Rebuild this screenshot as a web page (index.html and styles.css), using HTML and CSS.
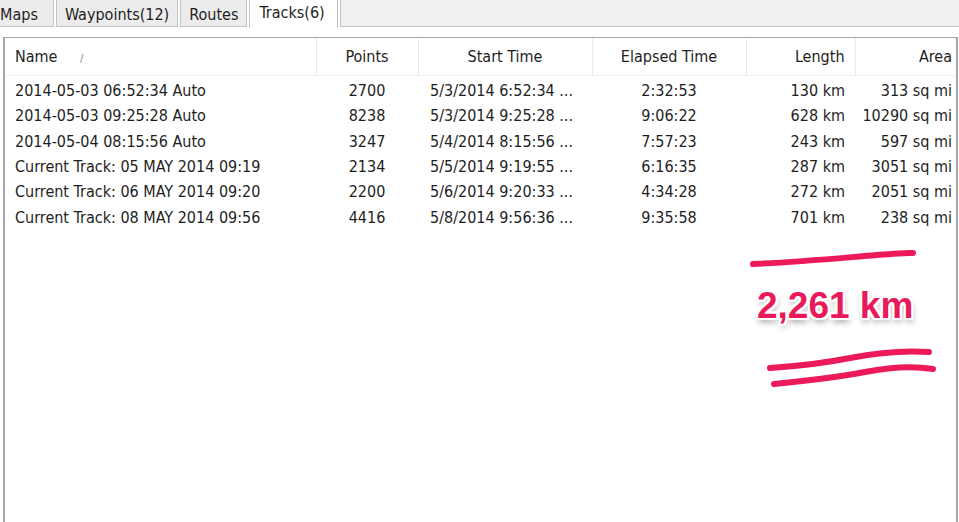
FILE: index.html
```html
<!DOCTYPE html>
<html lang="en">
<head>
    <meta charset="UTF-8">
    <title>Tracks</title>
    <link rel="stylesheet" href="styles.css">
</head>
<body>

    <div class="tabbar">
        <div class="tab tab-first">Maps</div>
        <div class="tab">Waypoints(12)</div>
        <div class="tab">Routes</div>
        <div class="tab active">Tracks(6)</div>
        <div class="tab-rest"></div>
    </div>

    <div class="pane">
        <div class="list">
            <table class="tracks">
                <colgroup>
                    <col class="c-name">
                    <col class="c-points">
                    <col class="c-start">
                    <col class="c-elapsed">
                    <col class="c-length">
                    <col class="c-area">
                </colgroup>
                <thead>
                    <tr>
                        <th class="left">Name <span class="sort">/</span></th>
                        <th>Points</th>
                        <th>Start Time</th>
                        <th>Elapsed Time</th>
                        <th class="right">Length</th>
                        <th class="right">Area</th>
                    </tr>
                </thead>
                <tbody>
                    <tr><td class="left">2014-05-03 06:52:34 Auto</td><td>2700</td><td class="start">5/3/2014 6:52:34 ...</td><td>2:32:53</td><td class="right">130 km</td><td class="right">313 sq mi</td></tr>
                    <tr><td class="left">2014-05-03 09:25:28 Auto</td><td>8238</td><td class="start">5/3/2014 9:25:28 ...</td><td>9:06:22</td><td class="right">628 km</td><td class="right">10290 sq mi</td></tr>
                    <tr><td class="left">2014-05-04 08:15:56 Auto</td><td>3247</td><td class="start">5/4/2014 8:15:56 ...</td><td>7:57:23</td><td class="right">243 km</td><td class="right">597 sq mi</td></tr>
                    <tr><td class="left">Current Track: 05 MAY 2014 09:19</td><td>2134</td><td class="start">5/5/2014 9:19:55 ...</td><td>6:16:35</td><td class="right">287 km</td><td class="right">3051 sq mi</td></tr>
                    <tr><td class="left">Current Track: 06 MAY 2014 09:20</td><td>2200</td><td class="start">5/6/2014 9:20:33 ...</td><td>4:34:28</td><td class="right">272 km</td><td class="right">2051 sq mi</td></tr>
                    <tr><td class="left">Current Track: 08 MAY 2014 09:56</td><td>4416</td><td class="start">5/8/2014 9:56:36 ...</td><td>9:35:58</td><td class="right">701 km</td><td class="right">238 sq mi</td></tr>
                </tbody>
            </table>

            <svg class="marks" width="959" height="522" viewBox="0 0 959 522">
                <path d="M753 264 C 800 262, 840 258, 877 255 S 905 253, 913 253" />
                <path d="M770 368 C 800 366, 825 363, 850 358 S 900 350, 929 352" />
                <path d="M774 384 C 805 381, 835 378, 865 372 S 915 366, 933 369" />
            </svg>
            <div class="total">2,261 km</div>
        </div>
    </div>

</body>
</html>
```

FILE: styles.css
```css
body {
    margin: 0;
    background-color: #ffffff;
    font-family: "DejaVu Sans Condensed", "DejaVu Sans", sans-serif;
    font-stretch: condensed;
    font-size: 16px;
    color: #1e1e1e;
    overflow: hidden;
}
.tabbar {
    display: flex;
    height: 28px;
}
.tab {
    box-sizing: border-box;
    height: 27px;
    padding: 5px 8px 0 8px;
    margin-right: 2px;
    background-color: #ececec;
    border: 1px solid #c4c4c4;
    border-top: none;
    white-space: nowrap;
}
.tab-first {
    padding-left: 0;
    padding-right: 15px;
    border-left: none;
}
.tab.active {
    height: 28px;
    padding-top: 3px;
    padding-left: 9px;
    padding-right: 12px;
    background-color: #ffffff;
    border-color: #c4c4c4;
    border-bottom: none;
}
.tab-rest {
    flex: 1;
    height: 26px;
    background-color: #f0f0f0;
    border-left: 1px solid #c4c4c4;
    border-bottom: 1px solid #c4c4c4;
}
.pane {
    padding: 9px 1px 0 3px;
}
.list {
    position: relative;
    height: 500px;
    overflow: hidden;
    border: 1px solid #a6a6a6;
    border-left: 2px solid #a6a6a6;
    border-right: 2px solid #a6a6a6;
}
.tracks {
    table-layout: fixed;
    width: 951px;
    border-collapse: collapse;
}
.c-name { width: 311px; }
.c-points { width: 102px; }
.c-start { width: 174px; }
.c-elapsed { width: 154px; }
.c-length { width: 109px; }
.c-area { width: 101px; }
th {
    height: 37px;
    padding: 0 8px;
    font-weight: normal;
    color: #1e1e1e;
    text-align: center;
    border-left: 1px solid #eaeaea;
    border-bottom: 1px solid #f0f0f0;
    white-space: nowrap;
}
th:first-child {
    border-left: none;
}
td {
    height: 25.4px;
    padding: 0 8px;
    text-align: center;
    white-space: nowrap;
    overflow: hidden;
}
tbody tr:first-child td {
    height: 26px;
    padding-top: 1px;
}
.left {
    text-align: left;
    padding-left: 10px;
}
.right {
    text-align: right;
    padding-right: 10px;
}
th.right:last-child,
td.right:last-child {
    padding-left: 0;
    padding-right: 4px;
    overflow: visible;
}
td.start {
    text-align: left;
    padding-left: 12px;
}
.sort {
    margin-left: 18px;
    font-size: 11px;
    color: #8a8a8a;
}
.marks {
    position: absolute;
    left: -5px;
    top: -38px;
    pointer-events: none;
}
.marks path {
    fill: none;
    stroke: #ec1a5a;
    stroke-width: 6;
    stroke-linecap: round;
}
.total {
    position: absolute;
    left: 752px;
    top: 247px;
    font-family: "Liberation Sans", Arial, sans-serif;
    font-stretch: normal;
    font-weight: bold;
    font-size: 37px;
    color: #e91a5a;
    text-shadow:
        -2px -2px 0 #ffffff, 2px -2px 0 #ffffff, -2px 2px 0 #ffffff, 2px 2px 0 #ffffff,
        0 -2px 0 #ffffff, 0 2px 0 #ffffff, -2px 0 0 #ffffff, 2px 0 0 #ffffff,
        1px 4px 6px rgba(0, 0, 0, 0.4);
}
```
